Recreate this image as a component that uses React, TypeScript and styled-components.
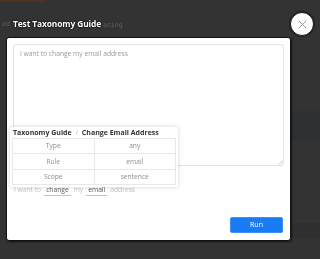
import React from 'react';
import styled, { createGlobalStyle } from 'styled-components';

// ── Data ──────────────────────────────────────────────────────────────────────

const GUIDE_ROWS = [
  { label: 'Type', value: 'any' },
  { label: 'Rule', value: 'email' },
  { label: 'Scope', value: 'sentence' },
];

const SENTENCE = [
  { text: 'I want to', tagged: false },
  { text: 'change', tagged: true },
  { text: 'my', tagged: false },
  { text: 'email', tagged: true },
  { text: 'address', tagged: false },
];

// ── Component ─────────────────────────────────────────────────────────────────

export default function App() {
  return (
    <>
      <GlobalStyle />
      <Page>
        <BrandBar />
        <CodeLine>ed</CodeLine>
        <Band $top={84} $height={30} $color="#2e3134" />
        <Band $top={82} $height={15} $color="#2f2f2f" />
      </Page>

      <Layer>
        <Header>
          <Title>Test Taxonomy Guide</Title>
          <CodeTail>acing</CodeTail>
          <CloseButton aria-label="close">
            <svg width="9" height="9" viewBox="0 0 9 9" fill="none">
              <path d="M1 1l7 7M8 1L1 8" stroke="#9a9a9a" strokeWidth="1" strokeLinecap="round" />
            </svg>
          </CloseButton>
        </Header>

        <Dialog>
          <Body>
            <TextArea placeholder="I want to change my email address" />
            <ResizeGrip>
              <svg width="6" height="6" viewBox="0 0 6 6" fill="none">
                <path d="M5.5 1.5L1.5 5.5M5.5 3.5L3.5 5.5" stroke="#c8c8c8" strokeWidth="0.8" />
              </svg>
            </ResizeGrip>

            <GuidePopover>
              <Crumbs>
                Taxonomy Guide <Slash>/</Slash> Change Email Address
              </Crumbs>
              <GuideTable>
                <tbody>
                  {GUIDE_ROWS.map((row) => (
                    <tr key={row.label}>
                      <Cell>{row.label}</Cell>
                      <Cell>{row.value}</Cell>
                    </tr>
                  ))}
                </tbody>
              </GuideTable>
            </GuidePopover>

            <Sentence>
              {SENTENCE.map((part, idx) =>
                part.tagged ? <Tag key={idx}>{part.text}</Tag> : <Word key={idx}>{part.text}</Word>
              )}
            </Sentence>

            <Actions>
              <RunButton>Run</RunButton>
            </Actions>
          </Body>
        </Dialog>
      </Layer>
    </>
  );
}

// ── Styled components ─────────────────────────────────────────────────────────

const GlobalStyle = createGlobalStyle`
  html, body {
    margin: 0;
    padding: 0;
    background: #333333;
    overflow: hidden;
  }
  * { box-sizing: border-box; }
`;

/* ── Page behind the overlay ── */
const Page = styled.div`
  display: flex;
  flex-direction: column;
  width: 320px;
  height: 259px;
  background: #333333;
`;

const BrandBar = styled.div`
  width: 45px;
  height: 2px;
  background: #4e321f;
`;

const CodeLine = styled.div`
  margin: 19px 0 0 2px;
  font-family: 'DejaVu Sans Mono', monospace;
  font-size: 6.5px;
  line-height: 6px;
  color: #5e5e5e;
`;

const Band = styled.div<{ $top: number; $height: number; $color: string }>`
  margin: ${(p) => p.$top}px 0 0 292px;
  height: ${(p) => p.$height}px;
  background: ${(p) => p.$color};
`;

/* ── Modal ── */
const Layer = styled.div`
  position: fixed;
  inset: 0;
  display: flex;
  flex-direction: column;
  padding-left: 6px;
  font-family: 'Open Sans', 'Liberation Sans', sans-serif;
`;

const Header = styled.div`
  display: flex;
  align-items: center;
  width: 308px;
  height: 37px;
  padding-top: 11px;
`;

const Title = styled.h1`
  margin: 0 0 0 4px;
  padding: 0 2px 0 3px;
  background: #333333;
  font-size: 8.4px;
  font-weight: 700;
  line-height: 12px;
  letter-spacing: -0.1px;
  color: #ffffff;
  text-shadow: 0 0 2px #000, 0 0 1px #000;
  white-space: nowrap;
`;

const CodeTail = styled.span`
  font-family: 'DejaVu Sans Mono', monospace;
  font-size: 6.5px;
  color: #5e5e5e;
  margin-top: 1px;
`;

const CloseButton = styled.button`
  margin-left: auto;
  width: 24px;
  height: 24px;
  padding: 0;
  border-radius: 50%;
  border: 1px solid #1a1a1a;
  background: #ffffff;
  display: flex;
  align-items: center;
  justify-content: center;
  box-shadow: 0 0 0 1px rgba(0, 0, 0, 0.4);
`;

const Dialog = styled.div`
  width: 285px;
  height: 204px;
  background: #ffffff;
  border: 1px solid #111111;
  border-radius: 3px;
  box-shadow: 1px 1px 2px rgba(0, 0, 0, 0.6);
`;

const Body = styled.div`
  position: relative;
  display: flex;
  flex-direction: column;
  padding: 6px 6px 7px 6px;
  height: 100%;
`;

const TextArea = styled.textarea`
  width: 271px;
  height: 122px;
  padding: 4px 6px;
  border: 1px solid #e2e2e2;
  border-radius: 3px;
  resize: none;
  font-family: 'Open Sans', 'Liberation Sans', sans-serif;
  font-size: 6.7px;
  line-height: 10px;
  color: #555;
  outline: none;

  &::placeholder {
    color: #9a9a9a;
  }
`;

const ResizeGrip = styled.span`
  position: absolute;
  left: 270px;
  top: 121px;
  width: 6px;
  height: 6px;
  display: flex;
  pointer-events: none;
`;

const GuidePopover = styled.div`
  position: absolute;
  left: 3px;
  top: 89px;
  width: 168px;
  padding: 1px 2px 2px;
  background: #ffffff;
  box-shadow: 0 0 4px rgba(0, 0, 0, 0.18);
  border-radius: 2px;
`;

const Crumbs = styled.div`
  padding: 0 0 0 1px;
  font-size: 7px;
  font-weight: 700;
  line-height: 10px;
  color: #333333;
  white-space: nowrap;
`;

const Slash = styled.span`
  color: #bbbbbb;
  font-weight: 400;
  margin: 0 2px;
`;

const GuideTable = styled.table`
  width: 164px;
  border-collapse: collapse;
`;

const Cell = styled.td`
  width: 50%;
  height: 15.4px;
  padding: 0;
  border: 1px solid #e8e8e8;
  text-align: center;
  font-size: 6.7px;
  line-height: 10px;
  color: #8e8e8e;
`;

const Sentence = styled.div`
  display: flex;
  align-items: center;
  gap: 3px;
  margin: 18px 0 0 1px;
  height: 12px;
  font-size: 6.7px;
  line-height: 10px;
`;

const Word = styled.span`
  color: #c2c2c2;
`;

const Tag = styled.span`
  padding: 0 2px;
  color: #5a5a5a;
  border-bottom: 1.5px solid #a8d8a0;
`;

const Actions = styled.div`
  display: flex;
  justify-content: flex-end;
  margin-top: auto;
  padding-right: 1px;
`;

const RunButton = styled.button`
  width: 53px;
  height: 16px;
  padding: 0;
  border: 1px solid #3b8ef8;
  border-radius: 2px;
  background: #1a7cf4;
  color: #ffffff;
  font-family: 'Open Sans', 'Liberation Sans', sans-serif;
  font-size: 7px;
  line-height: 14px;
`;
